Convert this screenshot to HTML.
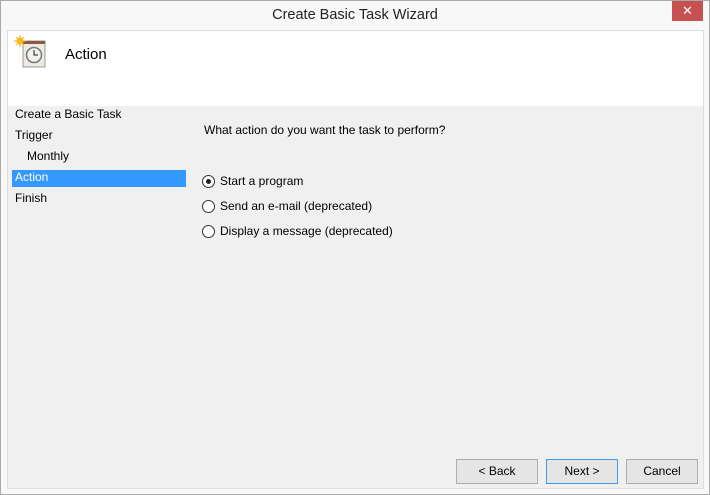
<!DOCTYPE html>
<html><head><style>
*{margin:0;padding:0;box-sizing:border-box}
body{width:710px;height:495px;background:#f8f8f8;font-family:"Liberation Sans",sans-serif;font-size:12px;color:#000;position:relative;overflow:hidden}
.frame{position:absolute;left:0;top:0;width:710px;height:495px;border:1px solid #aaa}
.title{position:absolute;top:7px;left:0;width:710px;text-align:center;font-size:14.5px;color:#222}
.close{position:absolute;left:672px;top:1px;width:31px;height:20px;background:#c75050;color:#fff;font-size:13px;text-align:center;line-height:20px}
.client{position:absolute;left:7px;top:30px;width:697px;height:459px;background:#f0f0f0;border:1px solid #ddd}
.head{position:absolute;left:0;top:0;width:695px;height:75px;background:#fff}
.h{position:absolute;left:57px;top:15px;font-size:15px}
.side div{position:absolute;left:7px;font-size:12px}
.sel{position:absolute;left:4px;top:139px;width:174px;height:17px;background:#3399ff}
.r{position:absolute;left:194px;font-size:12px}
.rad{position:absolute;left:194px;width:13px;height:13px;border:1px solid #333;border-radius:50%;background:#fff}
.btn{position:absolute;top:428px;height:25px;border:1px solid #adadad;background:#e5e5e5;text-align:center;line-height:23px;font-size:12px}
</style></head><body>
<div class="frame"></div>
<div class="title">Create Basic Task Wizard</div>
<div class="close">✕</div>
<div class="client">
<div class="head">
<svg style="position:absolute;left:5px;top:4px" width="36" height="36" viewBox="0 0 36 36">
<rect x="10" y="6" width="22" height="26" fill="#eeeae2" stroke="#999"/>
<rect x="10" y="6" width="22" height="3" fill="#8a5a40"/>
<circle cx="21" cy="20" r="7.5" fill="#f2f2f2" stroke="#777" stroke-width="1.5"/>
<path d="M21 15v5h4" stroke="#444" fill="none" stroke-width="1.2"/>
<circle cx="7" cy="6" r="3.5" fill="#f8b820"/>
<path d="M7 0v12M1 6h12M3 2l8 8M11 2l-8 8" stroke="#f8b820" stroke-width="1.2"/>
</svg>
<div class="h">Action</div>
</div>
<div class="sel"></div>
<div class="side">
<div style="top:76px">Create a Basic Task</div>
<div style="top:97px">Trigger</div>
<div style="top:118px;left:19px">Monthly</div>
<div style="top:139px;color:#fff">Action</div>
<div style="top:160px">Finish</div>
</div>
<div class="r" style="left:196px;top:92px">What action do you want the task to perform?</div>
<div class="rad" style="top:144px"><div style="position:absolute;left:3px;top:3px;width:5px;height:5px;border-radius:50%;background:#222"></div></div>
<div class="r" style="left:212px;top:143px">Start a program</div>
<div class="rad" style="top:169px"></div>
<div class="r" style="left:212px;top:168px">Send an e-mail (deprecated)</div>
<div class="rad" style="top:194px"></div>
<div class="r" style="left:212px;top:193px">Display a message (deprecated)</div>
<div class="btn" style="left:448px;width:82px">&lt; Back</div>
<div class="btn" style="left:538px;width:72px;border-color:#3c9be8">Next &gt;</div>
<div class="btn" style="left:618px;width:72px">Cancel</div>
</div>
</body></html>
